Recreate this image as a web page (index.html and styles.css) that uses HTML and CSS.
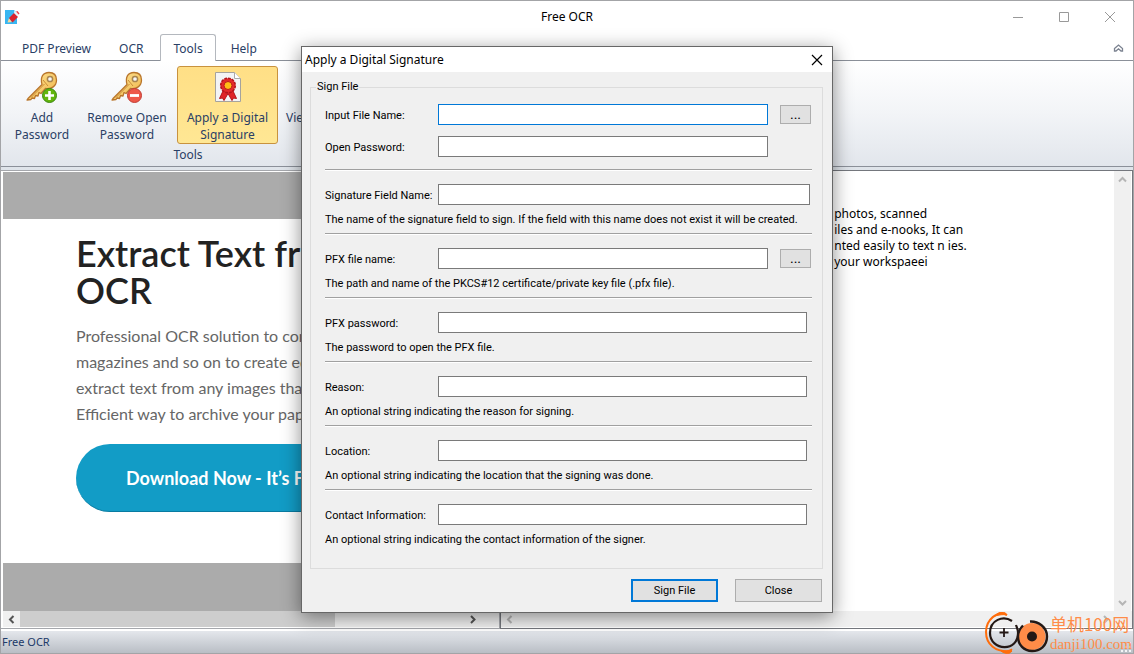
FILE: index.html
```html
<!DOCTYPE html>
<html lang="en">
<head>
<meta charset="utf-8">
<title>Free OCR</title>
<link rel="stylesheet" href="styles.css">
</head>
<body>
<svg class="defs" width="0" height="0" aria-hidden="true">
  <defs>
    <linearGradient id="gold" x1="0" y1="0" x2="1" y2="1"><stop offset="0" stop-color="#ffeaa0"/><stop offset="1" stop-color="#eeb040"/></linearGradient>
    <g id="key">
      <path d="M3 27.500 17 13.500C15 6 18 1.500 24 1.500c5.500 0 7.500 3 7.500 7.500 0 6-5 9.500-11 8.500l-4.500 5-2-1-1 3.500-2.500-.500-1 3-2.500-.500-1 1.500-4 .500z" fill="url(#gold)" stroke="#b9762c" stroke-width="1.300" stroke-linejoin="round"/>
      <circle cx="25" cy="8" r="2.600" fill="#f6f7f9" stroke="#a88550" stroke-width="1.500"/>
      <path d="M6 26.500 19.500 13M18 9l5 6" fill="none" stroke="#c98c35" stroke-width="1"/>
    </g>
  </defs>
</svg>
<div class="window">
  <header class="titlebar">
    <svg class="app-icon" width="16" height="16" viewBox="0 0 16 16"><path d="M1 1h9l3 3v11H1z" fill="#38b6f1"/><path d="M10 1v3h3" fill="#bfe8fc"/><path d="M3.500 13.500 5 9l3 4z" fill="#f6d99b"/><path d="M5 9l5-5 4 4-5.500 5.500z" fill="#d9232e"/><path d="M10 4l2-1.500 3 3L13 7z" fill="#f5f1f1"/><path d="M12 2.500l1.500-.500 2 2.500-1 1z" fill="#e8404a"/></svg>
    <h1 class="app-title">Free OCR</h1>
    <div class="window-buttons">
      <button aria-label="Minimize"><svg width="12" height="12" viewBox="0 0 12 12"><path d="M1 6.500h10"/></svg></button>
      <button aria-label="Maximize"><svg width="12" height="12" viewBox="0 0 12 12"><path d="M1.500 1.500h9v9h-9z"/></svg></button>
      <button aria-label="Close window"><svg width="12" height="12" viewBox="0 0 12 12"><path d="M1 1l10 10M11 1 1 11"/></svg></button>
    </div>
  </header>

  <nav class="tabs">
    <button>PDF Preview</button>
    <button>OCR</button>
    <button class="active">Tools</button>
    <button>Help</button>
    <button class="collapse" aria-label="Collapse ribbon"><svg width="11" height="9" viewBox="0 0 11 9"><path d="M1.500 4.500 5.500 1l4 3.500v2.500H8L5.500 4.800 3 7H1.500z" fill="none" stroke="#7b8290" stroke-width="1.300"/></svg></button>
  </nav>

  <section class="ribbon">
    <div class="group">
      <div class="commands">
        <button class="command add">
          <svg width="34" height="34" viewBox="0 0 34 34"><use href="#key"/><circle cx="24.500" cy="24.500" r="7" fill="#62b50b" stroke="#3c8711"/><path d="M24.500 20v9M20 24.500h9" stroke="#fff" stroke-width="2.600"/></svg>
          <span>Add<br>Password</span>
        </button>
        <button class="command remove">
          <svg width="34" height="34" viewBox="0 0 34 34"><use href="#key"/><circle cx="24.500" cy="24.500" r="7" fill="#ee5748" stroke="#c13d35"/><path d="M20 24.500h9" stroke="#fff" stroke-width="2.800"/></svg>
          <span>Remove Open<br>Password</span>
        </button>
        <button class="command apply selected">
          <svg width="34" height="34" viewBox="0 0 34 34"><path d="M4.500 1.500h19l6 6v23h-25z" fill="#f3f4f6" stroke="#a5a39e"/><path d="M23.500 1.500v6h6" fill="#fff" stroke="#aaa"/><path d="M12 20 8.500 27.500l3-.500 1.500 2.500 4-7 4 7 1.500-2.500 3 .500L22 20z" fill="#df2427" stroke="#b4151b"/><circle cx="17" cy="14.500" r="7.300" fill="#e4292b" stroke="#b4151b" stroke-width="1.600" stroke-dasharray="2.800 1"/><circle cx="17" cy="14.500" r="4" fill="#ffbd16" stroke="#b81b1b"/></svg>
          <span>Apply a Digital<br>Signature</span>
        </button>
        <button class="command view"><span>View</span></button>
      </div>
      <div class="group-name">Tools</div>
    </div>
  </section>

  <main class="panes">
    <section class="preview">
      <div class="canvas">
        <article class="page">
          <h2>Extract Text fr<br>OCR</h2>
          <p>Professional OCR solution to convert<br>magazines and so on to create editable<br>extract text from any images that<br>Efficient way to archive your papers</p>
          <a class="download" href="#download">Download Now - It’s Free</a>
        </article>
      </div>
      <div class="scroll-x">
        <svg class="arrow" width="17" height="17" viewBox="0 0 17 17"><path d="M10.500 5 7 8.500l3.500 3.500"/></svg>
        <div class="thumb"></div>
        <svg class="arrow far" width="17" height="17" viewBox="0 0 17 17"><path d="M7 5l3.500 3.500L7 12"/></svg>
      </div>
    </section>
    <section class="result">
      <div class="result-body">
        <p class="result-text">photos, scanned<br>iles and e-nooks, It can<br>nted easily to text n ies.<br>your workspaeei</p>
        <div class="scroll-y">
          <svg class="arrow" width="17" height="17" viewBox="0 0 17 17"><path d="M5 10.500 8.500 7l3.500 3.500"/></svg>
          <svg class="arrow" width="17" height="17" viewBox="0 0 17 17"><path d="M5 7l3.500 3.500L12 7"/></svg>
        </div>
      </div>
      <div class="scroll-x disabled">
        <svg class="arrow" width="17" height="17" viewBox="0 0 17 17"><path d="M10.500 5 7 8.500l3.500 3.500"/></svg>
        <svg class="arrow far" width="17" height="17" viewBox="0 0 17 17"><path d="M7 5l3.500 3.500L7 12"/></svg>
      </div>
    </section>
  </main>

  <footer class="status">
    <span>Free OCR</span>
    <svg width="12" height="12" viewBox="0 0 12 12"><path d="M8 1h2v2H8zM4 5h2v2H4zM8 5h2v2H8zM0 9h2v2H0zM4 9h2v2H4zM8 9h2v2H8z" fill="#f4f5f7"/></svg>
  </footer>
</div>

<div class="layer">
  <form class="dialog" role="dialog" aria-labelledby="dialog-title">
    <div class="dialog-title">
      <h2 id="dialog-title">Apply a Digital Signature</h2>
      <button type="button" aria-label="Close dialog"><svg width="12" height="12" viewBox="0 0 12 12"><path d="M1 1l10 10M11 1 1 11" stroke="#000" stroke-width="1.200"/></svg></button>
    </div>
    <fieldset>
      <legend>Sign File</legend>
      <div class="block first">
        <div class="row browse"><label for="in">Input File Name:</label><input id="in" class="focused" type="text"><button type="button" aria-label="Browse input file">...</button></div>
        <div class="row browse"><label for="pw">Open Password:</label><input id="pw" type="password"></div>
      </div>
      <div class="block">
        <div class="row wide"><label for="field">Signature Field Name:</label><input id="field" type="text"></div>
        <p>The name of the signature field to sign. If the field with this name does not exist it will be created.</p>
      </div>
      <div class="block">
        <div class="row browse"><label for="pfx">PFX file name:</label><input id="pfx" type="text"><button type="button" aria-label="Browse PFX file">...</button></div>
        <p>The path and name of the PKCS#12 certificate/private key file (.pfx file).</p>
      </div>
      <div class="block">
        <div class="row"><label for="pfxpw">PFX password:</label><input id="pfxpw" type="password"></div>
        <p>The password to open the PFX file.</p>
      </div>
      <div class="block">
        <div class="row"><label for="reason">Reason:</label><input id="reason" type="text"></div>
        <p>An optional string indicating the reason for signing.</p>
      </div>
      <div class="block">
        <div class="row"><label for="loc">Location:</label><input id="loc" type="text"></div>
        <p>An optional string indicating the location that the signing was done.</p>
      </div>
      <div class="block last">
        <div class="row"><label for="contact">Contact Information:</label><input id="contact" type="text"></div>
        <p>An optional string indicating the contact information of the signer.</p>
      </div>
    </fieldset>
    <div class="actions">
      <button type="button" class="primary">Sign File</button>
      <button type="button">Close</button>
    </div>
  </form>
</div>

<div class="watermark">
  <svg width="64" height="42" viewBox="0 0 64 42"><path d="M22 3C12-2 1 8 1 20s9 21 26 19" fill="none" stroke="#ff6d0c" stroke-width="2"/><path d="M10 4c4-5 10-5 12-1-4-1-8 0-12 1zM16 39c3 1 7 0 11-2l-2 4c-3 1-7 0-9-2z" fill="#ff6d0c" stroke="#ff6d0c"/><path d="M27 9C18 3 5 8 5 21c0 18 29 20 28-1-.200-3-1-4-2-7" fill="none" stroke="#231815" stroke-width="2.200"/><path d="M19 16v9M14.500 20.500h9" stroke="#231815" stroke-width="1.800"/><circle cx="47" cy="24.500" r="13.500" fill="#ff8c48"/><path d="M45 9.500C53 9 62 15 62 24.500S55 39 47 39s-14-6-14-14.500c0-5 2-8 5-11" fill="none" stroke="#231815" stroke-width="2.400"/><circle cx="47" cy="24.500" r="5" fill="#231815"/></svg>
  <div class="watermark-text"><span class="watermark-name">单机100网</span><span class="watermark-url">danji100.com</span></div>
</div>
</body>
</html>
```

FILE: styles.css
```css
* { box-sizing: border-box; }
body { margin: 0; font-family: "Noto Sans", sans-serif; font-size: 12px; color: #000; }
h1, h2, p { margin: 0; font-weight: normal; }
button { font: inherit; color: inherit; padding: 0; border: 0; background: none; }
svg { display: block; flex: none; }
.defs { position: absolute; }

.window { min-height: 100vh; display: flex; flex-direction: column; border: 1px solid #a3a4a7; background: #fff; overflow: hidden; }

.titlebar { display: grid; grid-template-columns: 1fr auto 1fr; align-items: center; height: 31px; padding: 0 17px 0 3px; }
.app-title { padding-left: 14px; font-size: 12px; }
.window-buttons { display: flex; justify-content: flex-end; gap: 34px; }
.window-buttons svg { fill: none; stroke: #999; }

.tabs { display: flex; height: 29px; padding: 2px 8px 0; border-bottom: 1px solid #8b9099; color: #2a4065; font-size: 12px; }
.tabs button { height: 27px; padding: 0 14px; border: 1px solid transparent; border-bottom: 0; }
.tabs button:first-child { padding: 0 12px; }
.tabs .active { margin-left: 2px; background: #fff; border-color: #b4b8be; border-radius: 3px 3px 0 0; padding: 0 12px; }
.tabs .collapse { margin-left: auto; padding: 0; }

.ribbon { height: 106px; padding: 5px 3px 0; background: linear-gradient(#fff, #f2f4f7 50%, #e2e6ec); border-bottom: 1px solid #8b9099; color: #2a4065; }
.group { display: flex; flex-direction: column; width: 368px; }
.commands { display: flex; }
.command { flex: none; display: flex; flex-direction: column; align-items: center; height: 78px; padding-top: 4px; border: 1px solid transparent; border-radius: 3px; line-height: 17px; white-space: nowrap; }
.command span { margin-top: 4px; }
.add { width: 76px; }
.remove { width: 94px; margin-right: 3px; }
.apply { width: 101px; }
.view { padding: 42px 0 0 7px; justify-content: flex-start; }
.view span { margin-top: 0; }
.command.selected { background: linear-gradient(#ffdf86, #ffe794); border-color: #c8923e; }
.group-name { line-height: 22px; text-align: center; }

.panes { flex: 1; display: flex; padding-top: 3px; background: #dfe4ea; }
.preview { flex: 498; min-width: 0; display: flex; flex-direction: column; padding-left: 2px; border: 1px solid #a5a7ac; border-left: 0; background: #fff; overflow: hidden; }
.canvas { flex: 1; margin: 1px 1px 0 0; padding: 47px 0 48px; background: #ababab; display: flex; }
.page { flex: 1; padding: 16px 0 0 73px; background: #fff; font-family: Lato, sans-serif; white-space: nowrap; }
.page h2 { font-size: 36px; line-height: 37px; font-weight: 600; color: #222; }
.page p { margin: 14px 0 17px; font-size: 16px; line-height: 26px; color: #666; }
.download { display: inline-flex; align-items: center; height: 68px; padding: 0 50px; border-radius: 34px; border-bottom: 1px solid #087ba1; background: #129cc6; color: #fff; font-size: 18px; font-weight: bold; text-decoration: none; }
.scroll-x { display: flex; height: 17px; background: #f0f0f0; border-bottom: 1px solid #fff; }
.arrow path { fill: none; stroke: #555; stroke-width: 2; }
.thumb { width: 315px; background: #cdcdcd; }
.far { margin-left: auto; }
.preview .far { margin-right: 18px; }
.result { flex: 633; min-width: 0; display: flex; flex-direction: column; border: 1px solid #74777d; background: #fff; }
.result-body { flex: 1; display: flex; }
.result-text { flex: 1; padding: 35px 0 0 333px; line-height: 16px; font-size: 12px; white-space: nowrap; }
.scroll-y { display: flex; flex-direction: column; justify-content: space-between; width: 17px; margin-right: 1px; background: #f0f0f0; }
.result .arrow path { stroke: #b5b5b5; }
.disabled .far { margin-right: 18px; }

.status { display: flex; justify-content: space-between; align-items: flex-end; height: 23px; margin-top: 1px; padding-left: 1px; line-height: 22px; font-size: 11px; color: #203a68; background: linear-gradient(#e4e7ec, #b9bec5); border-top: 1px solid #fff; }

.layer { position: absolute; top: 46px; left: 0; right: 0; display: flex; justify-content: center; }
.dialog { width: 532px; border: 1px solid #676767; background: #f0f0f0; box-shadow: 0 4px 18px rgba(0, 0, 0, .45); font-family: Roboto, sans-serif; font-size: 11px; }
.dialog-title { display: flex; align-items: center; justify-content: space-between; height: 25px; padding: 0 9px 0 3px; background: #fff; }
.dialog-title h2 { font-family: "Noto Sans", sans-serif; font-size: 12px; }
fieldset { margin: 8px 9px 0 8px; padding: 3px 10px 20px 14px; border: 1px solid #dcdcdc; min-width: 0; }
legend { margin-left: -9px; padding: 0 1px; line-height: 14px; }
.block { padding: 14px 0 5px; border-bottom: 1px solid #a0a0a0; box-shadow: 0 1px 0 #fff; }
.block.first { display: flex; flex-direction: column; gap: 11px; padding: 7px 0 12px; }
.block.last { border: 0; box-shadow: none; padding-bottom: 0; }
.block p { margin-top: 7px; line-height: 16px; white-space: nowrap; }
.row { display: grid; grid-template-columns: 113px 1fr; align-items: center; padding-right: 5px; }
.row.wide { padding-right: 2px; }
.row.browse { grid-template-columns: 113px 1fr 31px; padding-right: 1px; }
.row.browse input { margin-right: 12px; }
.row label { padding-top: 2px; white-space: nowrap; }
.row input { height: 21px; min-width: 0; padding: 0 3px; border: 1px solid #7a7a7a; background: #fff; font: inherit; outline: 0; }
.row .focused { border-color: #0078d7; }
.row button, .actions button { border: 1px solid #adadad; background: #e1e1e1; }
.row button { height: 19px; line-height: 17px; font-size: 14px; }
.actions { display: flex; justify-content: flex-end; gap: 17px; padding: 10px 10px 10px; }
.actions button { width: 87px; height: 23px; }
.actions .primary { border: 2px solid #0078d7; }

.watermark { position: absolute; right: 2px; bottom: 0; display: flex; align-items: flex-start; color: #ff8c48; white-space: nowrap; }
.watermark-text { display: flex; flex-direction: column; margin-left: 1px; }
.watermark-name { font: 17px/24px "Noto Sans CJK SC", sans-serif; }
.watermark-url { font: 15px/16px "Liberation Serif", serif; }
```
